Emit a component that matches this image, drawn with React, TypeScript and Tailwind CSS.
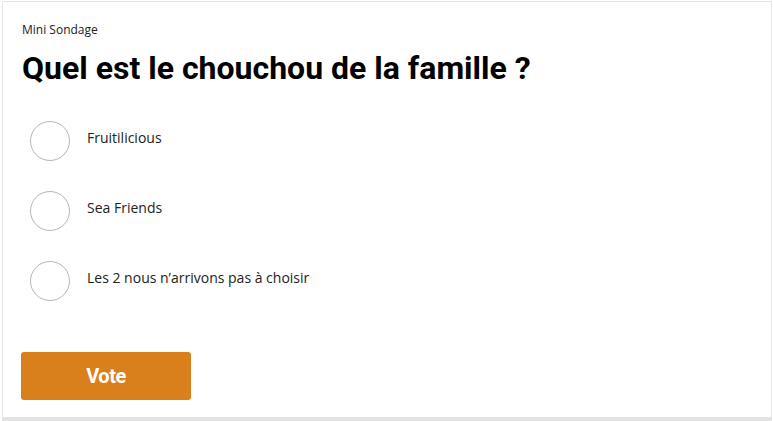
import { useState } from 'react';

const options = ['Fruitilicious', 'Sea Friends', 'Les 2 nous n’arrivons pas à choisir'];

export default function App() {
  const [selected, setSelected] = useState<number | null>(null);

  return (
    <div className="w-[773px] h-[421px] bg-white pl-[2px] pt-[1px] pr-[1px]">
      <div className="h-[420px] bg-white border border-[#e6e6e6] border-b-[4px] border-b-[#e3e3e3] px-[19px] pt-[19px]">
        <p className="text-[12px] leading-[18px] text-[#222] font-['Open_Sans',sans-serif]">Mini Sondage</p>
        <h1 className="mt-[10px] text-[32px] leading-[38px] font-bold text-black font-['Roboto',sans-serif]">
          Quel est le chouchou de la famille ?
        </h1>
        <div className="mt-[34px] flex flex-col gap-[30px] pl-[8px]">
          {options.map((o, i) => (
            <label key={o} className="flex items-center gap-[17px] cursor-pointer" onClick={() => setSelected(i)}>
              <span className="w-[40px] h-[40px] rounded-full border border-[#b5b5b5] flex items-center justify-center">
                {selected === i && <span className="w-[20px] h-[20px] rounded-full bg-[#d9801c]" />}
              </span>
              <span className="text-[14px] text-[#222] font-['Open_Sans',sans-serif] -mt-[8px]">{o}</span>
            </label>
          ))}
        </div>
        <button className="mt-[51px] -ml-[1px] w-[170px] h-[48px] rounded-[3px] bg-[#d9801c] text-white text-[20px] font-bold tracking-[-0.5px] font-['Roboto',sans-serif]">
          Vote
        </button>
      </div>
    </div>
  );
}
